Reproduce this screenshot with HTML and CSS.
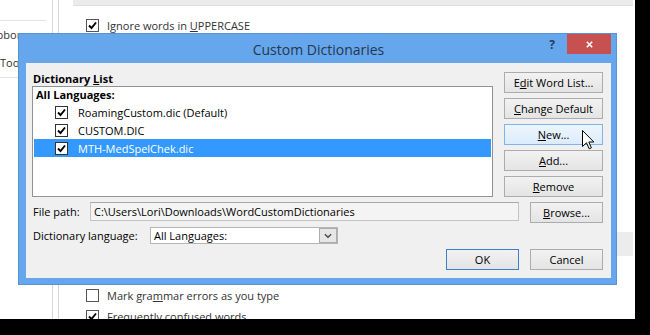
FILE: index.html
```html
<!DOCTYPE html>
<html>
<head>
<meta charset="utf-8">
<link rel="stylesheet" href="styles.css">
</head>
<body>
<div class="screen">
  <div class="app">
    <nav class="nav">
      <div class="nav-sep"></div>
      <div class="nav-item"><span class="shift-rib">Ribbon</span></div>
      <div class="nav-item"><span>Toolbar</span></div>
      <div class="nav-sep"></div>
    </nav>
    <div class="gutter"></div>
    <main class="main">
      <div class="topband"></div>
      <div class="opt opt-first"><span class="cb"><svg viewBox="0 0 11 11"><path d="M2 5.5 L4.5 8 L9 2.5"/></svg></span><span>Ignore words in <u>U</u>PPERCASE</span></div>
      <div class="section"></div>
      <div class="opt opt-mark"><span class="cb"></span><span>Mark gra<u>m</u>mar errors as you type</span></div>
      <div class="opt"><span class="cb"><svg viewBox="0 0 11 11"><path d="M2 5.5 L4.5 8 L9 2.5"/></svg></span><span>Frequently confused words</span></div>
    </main>
  </div>

  <div class="dialog">
    <div class="titlebar">
      <span></span>
      <span class="title">Custom Dictionaries</span>
      <div class="tb-right">
        <span class="help">?</span>
        <span class="close"><svg viewBox="0 0 10 10"><path d="M2 2 L8 8 M8 2 L2 8"/></svg></span>
      </div>
    </div>
    <div class="body">
      <div class="top">
        <div class="listcol">
          <div class="lbl">Dictionary <u>L</u>ist</div>
          <div class="list">
            <div class="list-head">All Languages:</div>
            <div class="row"><span class="cb"><svg viewBox="0 0 11 11"><path d="M2 5.5 L4.5 8 L9 2.5"/></svg></span><span>RoamingCustom.dic (Default)</span></div>
            <div class="row"><span class="cb"><svg viewBox="0 0 11 11"><path d="M2 5.5 L4.5 8 L9 2.5"/></svg></span><span>CUSTOM.DIC</span></div>
            <div class="row selected"><span class="cb"><svg viewBox="0 0 11 11"><path d="M2 5.5 L4.5 8 L9 2.5"/></svg></span><span>MTH-MedSpelChek.dic</span></div>
          </div>
        </div>
        <div class="btncol">
          <div class="btn"><span>E<u>d</u>it Word List...</span></div>
          <div class="btn"><span><u>C</u>hange Default</span></div>
          <div class="btn hover"><span><u>N</u>ew...</span></div>
          <div class="btn"><span><u>A</u>dd...</span></div>
          <div class="btn"><span><u>R</u>emove</span></div>
        </div>
      </div>
      <div class="line file">
        <span class="flabel">File path:</span>
        <div class="field">C:\Users\Lori\Downloads\WordCustomDictionaries</div>
        <div class="btn small"><span><u>B</u>rowse...</span></div>
      </div>
      <div class="line lang">
        <span class="llabel">Dictionary lan<u>g</u>uage:</span>
        <div class="combo">
          <span class="combo-text">All Languages:</span>
          <span class="combo-arrow"><svg viewBox="0 0 9 6"><path d="M1 1 L4.5 4.5 L8 1"/></svg></span>
        </div>
      </div>
      <div class="line actions">
        <div class="btn small default"><span>OK</span></div>
        <div class="btn small"><span>Cancel</span></div>
      </div>
    </div>
  </div>

  <svg class="cursor" viewBox="0 0 13 20" width="13" height="20">
    <path d="M0.5 0.5 L0.5 16.5 L4.5 12.8 L7.2 18.8 L9.4 17.8 L6.8 12 L11.8 12 Z" fill="#fff" stroke="#000" stroke-width="1" stroke-linejoin="miter"/>
  </svg>
</div>
</body>
</html>
```

FILE: styles.css
```css
* { box-sizing: border-box; }
html, body { margin: 0; padding: 0; }
body {
  background: #000;
  width: 650px;
  height: 335px;
  overflow: hidden;
  font-family: "Open Sans", "Noto Sans", sans-serif;
  font-size: 11px;
  color: #000;
}
u { text-decoration: underline; text-underline-offset: 1px; }

.screen {
  position: relative;
  width: 635px;
  height: 319px;
  background: #fff;
  overflow: hidden;
}

.app { display: flex; height: 100%; }

.nav {
  width: 53px;
  flex-shrink: 0;
  border-right: 1px solid #d6d6d6;
  overflow: hidden;
  padding-top: 20px;
  font-size: 11px;
  color: #333;
}
.nav-sep { width: 46px; height: 1px; background: #e3e3e3; }
.nav-item { height: 28px; line-height: 28px; white-space: nowrap; }
.shift-rib { display: inline-block; margin-left: -13px; }

.gutter { width: 5px; flex-shrink: 0; }

.main {
  flex: 1;
  border-left: 1px solid #d6d6d6;
  display: flex;
  flex-direction: column;
  font-size: 11px;
  color: #333;
  overflow: hidden;
}
.main > * { flex-shrink: 0; }
.topband {
  height: 6px;
  margin: 0 2px 0 14px;
  background: #ebebeb;
  border-bottom: 1px solid #dedede;
}
.opt {
  display: flex;
  align-items: center;
  height: 21px;
  padding-left: 27px;
  white-space: nowrap;
}
.opt-first { margin-top: 9px; }
.section {
  height: 24px;
  margin: 196px 2px 0 14px;
  background: #ececec;
}
.opt-mark { margin-top: 29px; }
.opt .cb { margin-right: 8px; border-color: #555; }

.cb {
  width: 13px;
  height: 13px;
  border: 1px solid #333;
  background: #fff;
  display: inline-flex;
  align-items: center;
  justify-content: center;
  flex: none;
}
.cb svg { width: 11px; height: 11px; }
.cb path { fill: none; stroke: #000; stroke-width: 1.9; }

/* dialog */
.dialog {
  position: absolute;
  left: 18px;
  top: 33px;
  width: 599px;
  height: 252px;
  background: #66a6ec;
  border: 1px solid #5592d8;
  display: flex;
  flex-direction: column;
}
.titlebar {
  height: 29px;
  display: grid;
  grid-template-columns: 1fr auto 1fr;
  padding: 0 5px 0 7px;
}
.title {
  font-size: 14px;
  color: #25364e;
  line-height: 29px;
  padding-top: 1px;
}
.tb-right { display: flex; justify-content: flex-end; align-items: flex-start; }
.help {
  font-size: 12px;
  font-weight: bold;
  color: #2a3c58;
  margin: 3px 12px 0 0;
  line-height: 16px;
}
.close {
  width: 44px;
  height: 20px;
  background: #c75050;
  display: flex;
  align-items: center;
  justify-content: center;
}
.close svg { width: 9px; height: 9px; }
.close path { stroke: #fff; stroke-width: 1.8; fill: none; }

.body {
  flex: 1;
  margin: 0 5px 6px 7px;
  background: #f0f0f0;
  padding: 9px 8px 8px 6px;
  display: flex;
  flex-direction: column;
}
.top { display: flex; gap: 11px; }
.listcol { flex: 1; display: flex; flex-direction: column; }
.lbl { height: 14px; line-height: 14px; font-weight: bold; padding-left: 1px; }
.list {
  height: 111px;
  background: #fff;
  border: 1px solid #8f9399;
}
.list-head { height: 16px; line-height: 16px; padding-left: 3px; font-weight: bold; }
.row {
  height: 18px;
  display: flex;
  align-items: center;
  padding-left: 21px;
  margin: 0 1px;
  white-space: nowrap;
}
.row .cb { margin-right: 10px; }
.row.selected { background: #3399ff; color: #fff; }

.btncol { width: 99px; display: flex; flex-direction: column; gap: 5px; }
.btn {
  height: 21px;
  border: 1px solid #acacac;
  background: linear-gradient(#f2f2f2, #e4e4e4);
  display: flex;
  align-items: center;
  justify-content: center;
  white-space: nowrap;
}
.btn.hover { background: linear-gradient(#edf5fd, #dcecfc); border-color: #7eb4ea; }
.btn.small { width: 73px; }
.btn.default { border-color: #3c7fd0; }

.line { display: flex; align-items: flex-start; }
.file { margin-top: 5px; height: 21px; }
.flabel { width: 58px; padding-left: 1px; line-height: 19px; }
.field {
  width: 429px;
  height: 19px;
  border: 1px solid #c4c4c4;
  border-top-color: #a8a8a8;
  background: #f4f4f4;
  padding-left: 3px;
  line-height: 17px;
  margin-right: 11px;
  white-space: nowrap;
}
.lang { margin-top: 4px; height: 17px; }
.llabel { width: 118px; padding-left: 1px; line-height: 17px; }
.combo {
  width: 188px;
  height: 17px;
  border: 1px solid #b5b5b5;
  background: #fff;
  display: flex;
  align-items: stretch;
}
.combo-text { flex: 1; padding-left: 3px; line-height: 15px; }
.combo-arrow {
  width: 18px;
  border: 1px solid #acacac;
  background: #e6e6e6;
  display: flex;
  align-items: center;
  justify-content: center;
}
.combo-arrow svg { width: 8px; height: 6px; }
.combo-arrow path { fill: none; stroke: #444; stroke-width: 1.5; }

.actions { margin-top: 5px; justify-content: flex-end; gap: 11px; }

.cursor { position: absolute; left: 582px; top: 130px; }
```
